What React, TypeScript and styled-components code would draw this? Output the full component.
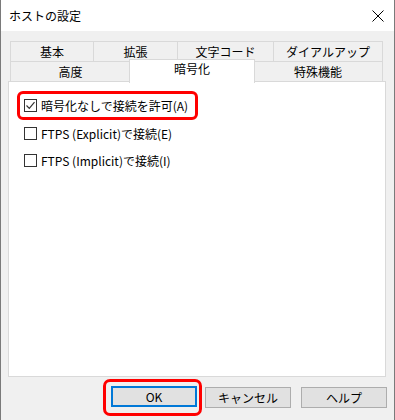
import styled, { createGlobalStyle } from "styled-components"

const GlobalStyle = createGlobalStyle`
  * { box-sizing: border-box; }
  body {
    margin: 0;
    background: #ffffff;
    font-family: "Noto Sans CJK JP", "Noto Sans", sans-serif;
    font-size: 12px;
    color: #000;
  }
`

const Window = styled.div`
  width: 395px;
  height: 420px;
  border-left: 1px solid #7a7a7a;
  border-right: 1px solid #7a7a7a;
  background: #f0f0f0;
  display: flex;
  flex-direction: column;
`

const TitleBar = styled.div`
  height: 31px;
  background: #fff;
  display: flex;
  align-items: center;
  justify-content: space-between;
  padding: 0 10px 0 8px;
`

const Title = styled.span`
  font-size: 12px;
  line-height: 1;
`

const CloseBtn = styled.svg`
  width: 12px;
  height: 12px;
  display: block;
`

const Body = styled.div`
  flex: 1;
  padding: 10px 8px 0 7px;
  display: flex;
  flex-direction: column;
`

const TabStrip = styled.div`
  margin: 0 3px 0 2px;
`

const TabRow = styled.div<{ $back?: boolean }>`
  display: flex;
  height: 21px;
  align-items: flex-start;
  margin-top: ${(p) => (p.$back ? "0" : "-1px")};
`

const Tab = styled.div<{ $w: number; $active?: boolean }>`
  width: ${(p) => p.$w}px;
  height: ${(p) => (p.$active ? 24 : 21)}px;
  margin-left: ${(p) => (p.$active ? -2 : -1)}px;
  margin-right: ${(p) => (p.$active ? -1 : 0)}px;
  margin-top: ${(p) => (p.$active ? -2 : 0)}px;
  border: 1px solid #d9d9d9;
  border-bottom: ${(p) => (p.$active ? "none" : "1px solid #d9d9d9")};
  background: ${(p) => (p.$active ? "#fff" : "#f0f0f0")};
  position: ${(p) => (p.$active ? "relative" : "static")};
  z-index: ${(p) => (p.$active ? 2 : "auto")};
  display: flex;
  justify-content: center;
  align-items: ${(p) => (p.$active ? "flex-start" : "center")};
  padding-top: ${(p) => (p.$active ? "3px" : "0")};
  font-size: 12px;
  line-height: 1;
  &:first-child {
    margin-left: 0;
  }
`

const Panel = styled.div`
  margin-top: -1px;
  width: 378px;
  height: 296px;
  background: #fff;
  border: 1px solid #d9d9d9;
  padding: 9px 8px 0 8px;
  display: flex;
  flex-direction: column;
  align-items: flex-start;
`

const Highlight = styled.div<{ $pad: string; $radius: number; $w?: number; $h?: number; $mr?: number }>`
  border: 3px solid #ff0000;
  border-radius: ${(p) => p.$radius}px;
  padding: ${(p) => p.$pad};
  width: ${(p) => (p.$w ? `${p.$w}px` : "auto")};
  height: ${(p) => (p.$h ? `${p.$h}px` : "auto")};
  margin-right: ${(p) => p.$mr ?? 0}px;
  display: flex;
  align-items: center;
`

const CheckRow = styled.label<{ $h: number; $pl: number }>`
  display: flex;
  align-items: center;
  height: ${(p) => p.$h}px;
  padding-left: ${(p) => p.$pl}px;
  padding-right: 6px;
  gap: 4px;
  font-size: 12px;
  white-space: nowrap;
`

const Box = styled.span`
  width: 13px;
  height: 13px;
  border: 1px solid #333;
  background: #fff;
  display: flex;
  align-items: center;
  justify-content: center;
  flex-shrink: 0;
`

const ButtonRow = styled.div`
  display: flex;
  justify-content: flex-end;
  align-items: center;
  padding: 2px 0 0 0;
  margin-right: -1px;
`

const Button = styled.button<{ $default?: boolean; $ml?: number }>`
  width: 86px;
  height: 21px;
  margin-left: ${(p) => p.$ml ?? 0}px;
  background: #e1e1e1;
  border: ${(p) => (p.$default ? "2px solid #0078d7" : "1px solid #adadad")};
  font-family: "Noto Sans CJK JP", "Noto Sans", sans-serif;
  font-size: 12px;
  color: #000;
  padding: 0;
  line-height: 1;
`

function CheckBox({ checked }: { checked?: boolean }) {
  return (
    <Box>
      {checked && (
        <svg width="11" height="11" viewBox="0 0 11 11">
          <path d="M1.5 5.5 L4.3 8.3 L9.5 2.2" fill="none" stroke="#333" strokeWidth="1.2" />
        </svg>
      )}
    </Box>
  )
}

function App() {
  return (
    <>
      <GlobalStyle />
      <Window>
        <TitleBar>
          <Title>ホストの設定</Title>
          <CloseBtn viewBox="0 0 12 12">
            <path d="M0.5 0.5 L11.5 11.5 M11.5 0.5 L0.5 11.5" stroke="#000" strokeWidth="1" />
          </CloseBtn>
        </TitleBar>
        <Body>
          <TabStrip>
            <TabRow $back>
              <Tab $w={84}>基本</Tab>
              <Tab $w={85}>拡張</Tab>
              <Tab $w={97}>文字コード</Tab>
              <Tab $w={110}>ダイアルアップ</Tab>
            </TabRow>
            <TabRow>
              <Tab $w={121}>高度</Tab>
              <Tab $w={126} $active>暗号化</Tab>
              <Tab $w={130}>特殊機能</Tab>
            </TabRow>
          </TabStrip>
          <Panel>
            <Highlight $pad="0 0 0 4px" $radius={6} $w={181} $h={29}>
              <CheckRow $h={23} $pl={0}>
                <CheckBox checked />
                暗号化なしで接続を許可(A)
              </CheckRow>
            </Highlight>
            <CheckRow $h={27} $pl={7}>
              <CheckBox />
              FTPS (Explicit)で接続(E)
            </CheckRow>
            <CheckRow $h={27} $pl={7}>
              <CheckBox />
              FTPS (Implicit)で接続(I)
            </CheckRow>
          </Panel>
          <ButtonRow>
            <Highlight $pad="4px 2px 6px 5px" $radius={7} $mr={3}>
              <Button $default>OK</Button>
            </Highlight>
            <Button>キャンセル</Button>
            <Button $ml={10}>ヘルプ</Button>
          </ButtonRow>
        </Body>
      </Window>
    </>
  )
}

export default App
